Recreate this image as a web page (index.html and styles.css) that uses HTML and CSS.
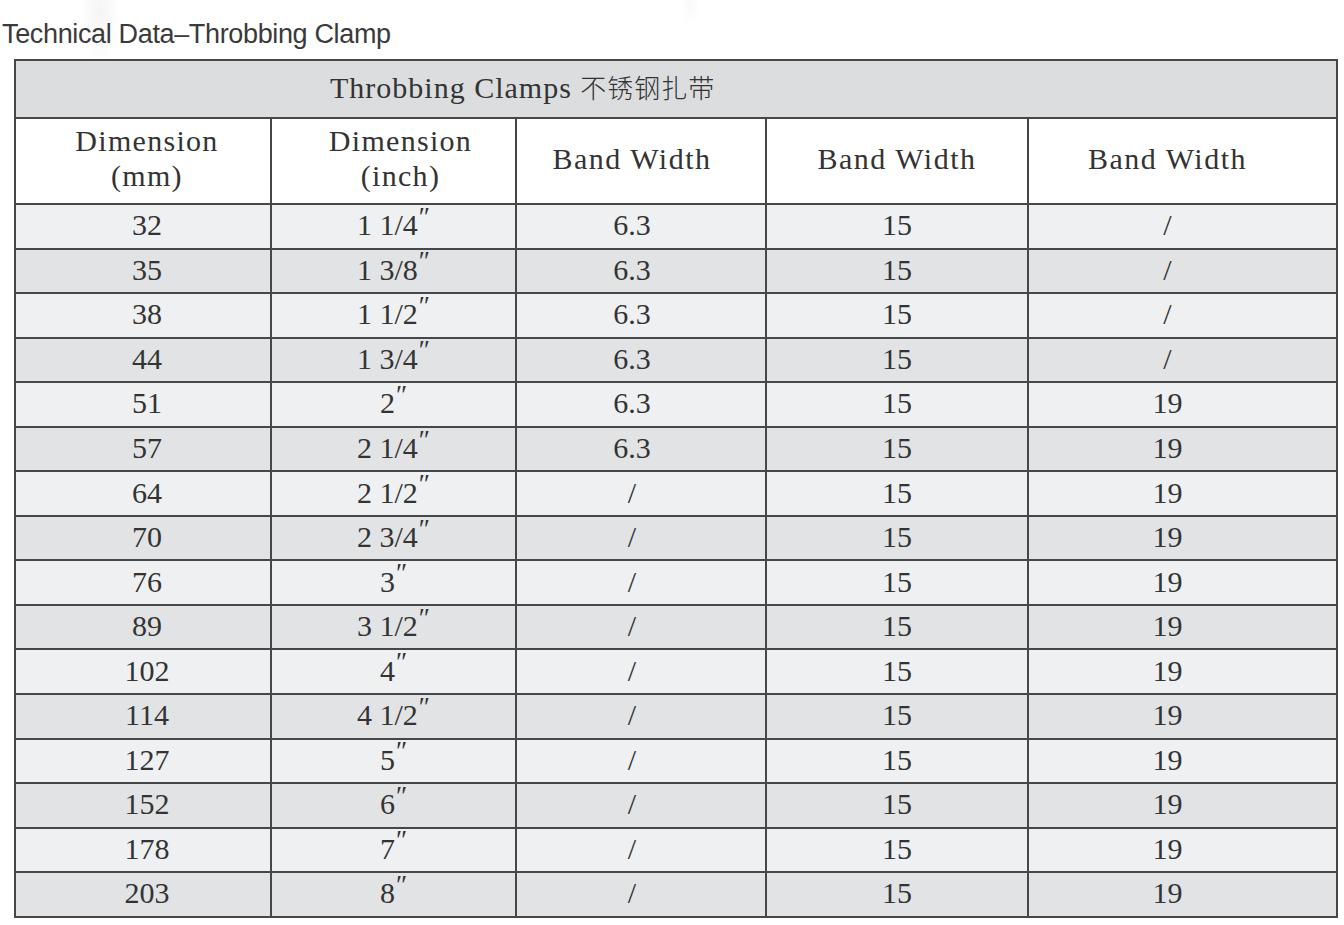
FILE: index.html
```html
<!DOCTYPE html>
<html lang="en">
<head>
<meta charset="utf-8">
<title>Technical Data – Throbbing Clamp</title>
<link rel="stylesheet" href="styles.css">
</head>
<body>
<div class="page">
  <h1 class="caption">Technical Data–Throbbing Clamp</h1>
  <table class="spec">
    <colgroup>
      <col class="c1"><col class="c2"><col class="c3"><col class="c4"><col class="c5">
    </colgroup>
    <thead>
      <tr class="title-row"><th colspan="5" class="title-cell">Throbbing Clamps <span class="cjk">不锈钢扎带</span></th></tr>
      <tr class="head-row">
        <th>Dimension<br>(mm)</th>
        <th>Dimension<br>(inch)</th>
        <th>Band Width</th>
        <th>Band Width</th>
        <th>Band Width</th>
      </tr>
    </thead>
    <tbody>
      <tr><td>32</td><td>1 1/4<span class="ip">″</span></td><td>6.3</td><td>15</td><td>/</td></tr>
      <tr><td>35</td><td>1 3/8<span class="ip">″</span></td><td>6.3</td><td>15</td><td>/</td></tr>
      <tr><td>38</td><td>1 1/2<span class="ip">″</span></td><td>6.3</td><td>15</td><td>/</td></tr>
      <tr><td>44</td><td>1 3/4<span class="ip">″</span></td><td>6.3</td><td>15</td><td>/</td></tr>
      <tr><td>51</td><td>2<span class="ip">″</span></td><td>6.3</td><td>15</td><td>19</td></tr>
      <tr><td>57</td><td>2 1/4<span class="ip">″</span></td><td>6.3</td><td>15</td><td>19</td></tr>
      <tr><td>64</td><td>2 1/2<span class="ip">″</span></td><td>/</td><td>15</td><td>19</td></tr>
      <tr><td>70</td><td>2 3/4<span class="ip">″</span></td><td>/</td><td>15</td><td>19</td></tr>
      <tr><td>76</td><td>3<span class="ip">″</span></td><td>/</td><td>15</td><td>19</td></tr>
      <tr><td>89</td><td>3 1/2<span class="ip">″</span></td><td>/</td><td>15</td><td>19</td></tr>
      <tr><td>102</td><td>4<span class="ip">″</span></td><td>/</td><td>15</td><td>19</td></tr>
      <tr><td>114</td><td>4 1/2<span class="ip">″</span></td><td>/</td><td>15</td><td>19</td></tr>
      <tr><td>127</td><td>5<span class="ip">″</span></td><td>/</td><td>15</td><td>19</td></tr>
      <tr><td>152</td><td>6<span class="ip">″</span></td><td>/</td><td>15</td><td>19</td></tr>
      <tr><td>178</td><td>7<span class="ip">″</span></td><td>/</td><td>15</td><td>19</td></tr>
      <tr><td>203</td><td>8<span class="ip">″</span></td><td>/</td><td>15</td><td>19</td></tr>
    </tbody>
  </table>
</div>
</body>
</html>
```

FILE: styles.css
```css
html, body {
  margin: 0;
  padding: 0;
  background: #ffffff;
}

body {
  background-image:
    radial-gradient(ellipse 20px 60px at 100px 10px, rgba(0, 0, 0, 0.04), rgba(0, 0, 0, 0) 100%),
    radial-gradient(ellipse 10px 30px at 690px 0px, rgba(0, 0, 0, 0.025), rgba(0, 0, 0, 0) 100%);
  background-repeat: no-repeat;
}

.page {
  padding: 19px 0 0 0;
}

.caption {
  margin: 0 0 10px 2px;
  font-family: "Liberation Sans", Arial, sans-serif;
  font-weight: normal;
  font-size: 27px;
  line-height: 30px;
  color: #3a3a3a;
  letter-spacing: -0.35px;
}

.spec {
  margin-left: 14px;
  width: 1322px;
  border-collapse: collapse;
  table-layout: fixed;
  font-family: "Liberation Serif", "Times New Roman", serif;
  color: #333333;
}

.c1 { width: 256px; }
.c2 { width: 245px; }
.c3 { width: 250px; }
.c4 { width: 262px; }
.c5 { width: 309px; }

.spec th,
.spec td {
  border: 2px solid #474747;
  padding: 0;
  text-align: center;
  vertical-align: middle;
  font-weight: normal;
}

/* small offsets of the text inside each column, as in the print */
.spec .head-row > :nth-child(1),
.spec tbody tr > :nth-child(1) { padding-left: 8px; }
.spec .head-row > :nth-child(3),
.spec tbody tr > :nth-child(3) { padding-right: 18px; }
.spec .head-row > :nth-child(5),
.spec tbody tr > :nth-child(5) { padding-right: 30px; }
.spec .head-row > :nth-child(2) { padding-left: 14px; }

.title-row { height: 58px; }

.spec .title-row .title-cell {
  background: #dcdddf;
  text-align: left;
  padding: 0 0 6px 314px;
  font-size: 30px;
  letter-spacing: 1px;
}

.cjk {
  font-family: "Noto Sans CJK SC", sans-serif;
  font-size: 26px;
  font-weight: 300;
  letter-spacing: 1px;
}

.head-row { height: 86px; }

.head-row th {
  background: #ffffff;
  font-size: 30px;
  line-height: 35px;
  letter-spacing: 1.3px;
  padding-bottom: 6px;
}

.head-row th:nth-child(n+3) {
  letter-spacing: 1.5px;
}

.spec tbody tr { height: 44.56px; }

.spec tbody td {
  font-size: 30px;
  line-height: 30px;
  padding-bottom: 2px;
}

.spec tbody tr:nth-child(odd) td { background: #eff0f2; }
.spec tbody tr:nth-child(even) td { background: #e2e3e5; }

.ip {
  font-size: 27px;
  vertical-align: 0.35em;
  line-height: 0;
  margin-left: 1px;
}
```
